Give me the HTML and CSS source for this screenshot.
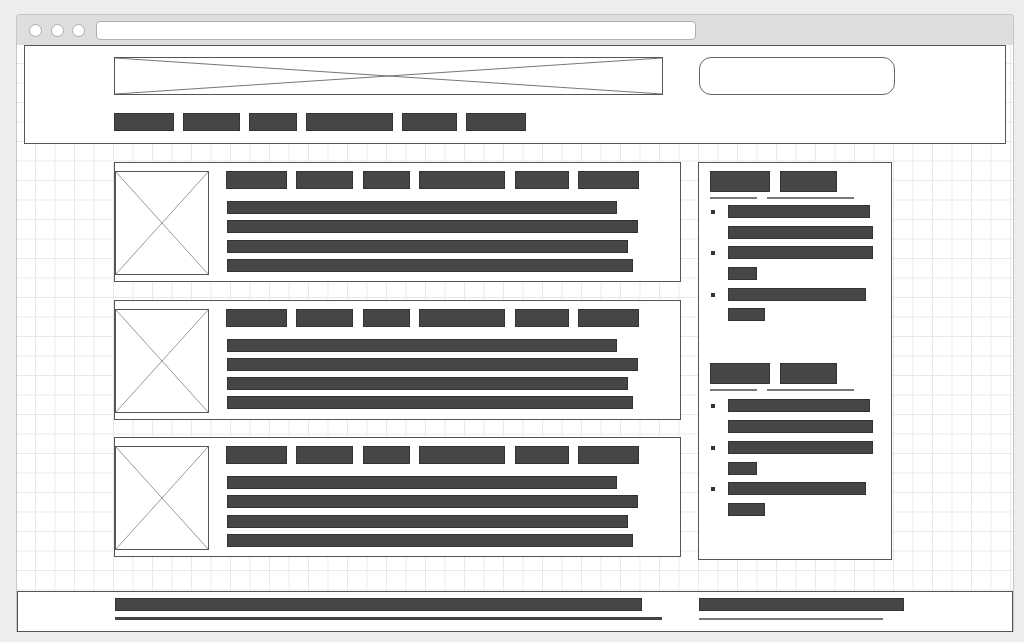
FILE: index.html
```html
<!DOCTYPE html>
<html lang="en">
  <head>
    <meta charset="UTF-8" />
    <meta name="viewport" content="width=device-width, initial-scale=1.0" />
    <title>Wireframe - Blog Layout</title>
    <link rel="stylesheet" href="styles.css">
  </head>
  <body>
    <div class="browser">
      <div class="titlebar">
        <span class="dot"></span>
        <span class="dot"></span>
        <span class="dot"></span>
        <div class="address"></div>
      </div>

      <div class="page">
        <div class="header">
          <div class="header-top">
            <div class="logo">
              <svg viewBox="0 0 100 100" preserveAspectRatio="none">
                <line x1="0" y1="0" x2="100" y2="100" />
                <line x1="0" y1="100" x2="100" y2="0" />
              </svg>
            </div>
            <div class="search"></div>
          </div>
          <div class="nav">
            <span class="bar nav-item" style="width: 60px"></span>
            <span class="bar nav-item" style="width: 57px"></span>
            <span class="bar nav-item" style="width: 48px"></span>
            <span class="bar nav-item" style="width: 87px"></span>
            <span class="bar nav-item" style="width: 55px"></span>
            <span class="bar nav-item" style="width: 60px"></span>
          </div>
        </div>

        <div class="main">
          <div class="cards">
            <div class="card">
              <div class="thumb">
                <svg viewBox="0 0 100 100" preserveAspectRatio="none">
                  <line x1="0" y1="0" x2="100" y2="100" />
                  <line x1="0" y1="100" x2="100" y2="0" />
                </svg>
              </div>
              <div class="card-body">
                <div class="tags">
                  <span class="bar tag" style="width: 61px"></span>
                  <span class="bar tag" style="width: 57px"></span>
                  <span class="bar tag" style="width: 47px"></span>
                  <span class="bar tag" style="width: 86px"></span>
                  <span class="bar tag" style="width: 54px"></span>
                  <span class="bar tag" style="width: 61px"></span>
                </div>
                <div class="lines">
                  <span class="bar line" style="width: 390px"></span>
                  <span class="bar line" style="width: 411px"></span>
                  <span class="bar line" style="width: 401px"></span>
                  <span class="bar line" style="width: 406px"></span>
                </div>
              </div>
            </div>

            <div class="card">
              <div class="thumb">
                <svg viewBox="0 0 100 100" preserveAspectRatio="none">
                  <line x1="0" y1="0" x2="100" y2="100" />
                  <line x1="0" y1="100" x2="100" y2="0" />
                </svg>
              </div>
              <div class="card-body">
                <div class="tags">
                  <span class="bar tag" style="width: 61px"></span>
                  <span class="bar tag" style="width: 57px"></span>
                  <span class="bar tag" style="width: 47px"></span>
                  <span class="bar tag" style="width: 86px"></span>
                  <span class="bar tag" style="width: 54px"></span>
                  <span class="bar tag" style="width: 61px"></span>
                </div>
                <div class="lines">
                  <span class="bar line" style="width: 390px"></span>
                  <span class="bar line" style="width: 411px"></span>
                  <span class="bar line" style="width: 401px"></span>
                  <span class="bar line" style="width: 406px"></span>
                </div>
              </div>
            </div>

            <div class="card">
              <div class="thumb">
                <svg viewBox="0 0 100 100" preserveAspectRatio="none">
                  <line x1="0" y1="0" x2="100" y2="100" />
                  <line x1="0" y1="100" x2="100" y2="0" />
                </svg>
              </div>
              <div class="card-body">
                <div class="tags">
                  <span class="bar tag" style="width: 61px"></span>
                  <span class="bar tag" style="width: 57px"></span>
                  <span class="bar tag" style="width: 47px"></span>
                  <span class="bar tag" style="width: 86px"></span>
                  <span class="bar tag" style="width: 54px"></span>
                  <span class="bar tag" style="width: 61px"></span>
                </div>
                <div class="lines">
                  <span class="bar line" style="width: 390px"></span>
                  <span class="bar line" style="width: 411px"></span>
                  <span class="bar line" style="width: 401px"></span>
                  <span class="bar line" style="width: 406px"></span>
                </div>
              </div>
            </div>
          </div>

          <div class="sidebar">
            <div class="widget">
              <div class="widget-head">
                <span class="bar head-block" style="width: 60px"></span>
                <span class="bar head-block" style="width: 57px"></span>
              </div>
              <div class="widget-rule">
                <span class="rule" style="width: 47px"></span>
                <span class="rule" style="width: 87px"></span>
              </div>
              <ul class="list">
                <li>
                  <span class="bar item" style="width: 142px"></span>
                  <span class="bar item" style="width: 145px"></span>
                </li>
                <li>
                  <span class="bar item" style="width: 145px"></span>
                  <span class="bar item" style="width: 29px"></span>
                </li>
                <li>
                  <span class="bar item" style="width: 138px"></span>
                  <span class="bar item" style="width: 37px"></span>
                </li>
              </ul>
            </div>

            <div class="widget">
              <div class="widget-head">
                <span class="bar head-block" style="width: 60px"></span>
                <span class="bar head-block" style="width: 57px"></span>
              </div>
              <div class="widget-rule">
                <span class="rule" style="width: 47px"></span>
                <span class="rule" style="width: 87px"></span>
              </div>
              <ul class="list">
                <li>
                  <span class="bar item" style="width: 142px"></span>
                  <span class="bar item" style="width: 145px"></span>
                </li>
                <li>
                  <span class="bar item" style="width: 145px"></span>
                  <span class="bar item" style="width: 29px"></span>
                </li>
                <li>
                  <span class="bar item" style="width: 138px"></span>
                  <span class="bar item" style="width: 37px"></span>
                </li>
              </ul>
            </div>
          </div>
        </div>

        <div class="footer">
          <div class="footer-col footer-left">
            <span class="bar footer-bar" style="width: 527px"></span>
            <span class="footer-line thick" style="width: 547px"></span>
          </div>
          <div class="footer-col footer-right">
            <span class="bar footer-bar" style="width: 205px"></span>
            <span class="footer-line thin" style="width: 184px"></span>
          </div>
        </div>
      </div>
    </div>
  </body>
</html>
```
FILE: styles.css
```css
* {
  margin: 0;
  padding: 0;
  box-sizing: border-box;
}

body {
  font-family: "Liberation Sans", Arial, sans-serif;
  background: #ededed;
  height: 642px;
  overflow: hidden;
}

.browser {
  margin: 14px 0 0 16px;
  width: 998px;
  border: 1px solid #c6c6c6;
  border-bottom: none;
  border-radius: 4px 4px 0 0;
  background: #fff;
}

/* Window chrome */
.titlebar {
  height: 30px;
  background: #dedede;
  display: flex;
  align-items: center;
  padding-left: 12px;
  gap: 8.5px;
  border-radius: 3px 3px 0 0;
}

.dot {
  width: 13px;
  height: 13px;
  border-radius: 50%;
  background: #fff;
  border: 1px solid #aaa;
}

.address {
  width: 600px;
  height: 19px;
  margin-left: 2px;
  background: #fff;
  border: 1px solid #b0b0b0;
  border-radius: 4px;
}

/* Content area with the sketch grid */
.page {
  background-color: #fff;
  background-image: linear-gradient(#e9e9e9 1px, transparent 1px),
    linear-gradient(90deg, #e9e9e9 1px, transparent 1px);
  background-size: 19.5px 19.5px;
  background-position: 18px 18px;
}

.bar {
  display: block;
  background: #464646;
  border: 1px solid #333;
}

.header {
  margin-left: 7px;
  width: 982px;
  background: #fff;
  border: 1px solid #555;
  padding: 11px 0 12px 89px;
}

.header-top {
  display: flex;
  gap: 36px;
}

.logo {
  width: 549px;
  height: 38px;
  border: 1px solid #555;
}

.logo svg,
.thumb svg {
  display: block;
  width: 100%;
  height: 100%;
}

.logo line {
  stroke: #777;
  stroke-width: 1;
  vector-effect: non-scaling-stroke;
}

.search {
  width: 196px;
  height: 38px;
  border: 1px solid #666;
  border-radius: 12px;
}

.nav {
  display: flex;
  gap: 9px;
  margin-top: 18px;
}

.nav-item {
  height: 18px;
}

/* Main columns */
.main {
  display: flex;
  align-items: flex-start;
  gap: 17px;
  padding: 18px 0 31px 97px;
}

.cards {
  width: 567px;
  display: flex;
  flex-direction: column;
  gap: 17.5px;
}

.card {
  display: flex;
  gap: 17px;
  background: #fff;
  border: 1px solid #555;
  padding: 8px 0 6px 0;
}

.thumb {
  width: 94px;
  height: 104px;
  border: 1px solid #555;
}

.thumb line {
  stroke: #999;
  stroke-width: 1;
  vector-effect: non-scaling-stroke;
}

.card-body {
  flex: 1;
}

.tags {
  display: flex;
  gap: 9.4px;
}

.tag {
  height: 18px;
}

.lines {
  display: flex;
  flex-direction: column;
  gap: 6.3px;
  margin: 12px 0 0 1px;
}

.line {
  height: 13px;
}

/* Sidebar */
.sidebar {
  width: 194px;
  height: 398px;
  background: #fff;
  border: 1px solid #555;
  padding: 8px 0 0 11px;
  display: flex;
  flex-direction: column;
  gap: 42px;
}

.widget-head {
  display: flex;
  gap: 10px;
}

.head-block {
  height: 21px;
}

.widget-rule {
  display: flex;
  gap: 10px;
  margin-top: 5px;
}

.rule {
  display: block;
  height: 2px;
  background: #777;
}

.list {
  list-style: none;
  margin-top: 6px;
  display: flex;
  flex-direction: column;
  gap: 7.7px;
}

.widget + .widget .list {
  margin-top: 8px;
}

.list li {
  position: relative;
  padding-left: 18px;
  display: flex;
  flex-direction: column;
  gap: 7.7px;
}

.list li::before {
  content: "";
  position: absolute;
  left: 1px;
  top: 5px;
  width: 4px;
  height: 4px;
  background: #333;
}

.item {
  height: 13px;
}

/* Footer */
.footer {
  display: flex;
  gap: 38px;
  height: 41px;
  background: #fff;
  border: 1px solid #555;
  padding: 6px 0 0 97px;
}

.footer-col {
  display: flex;
  flex-direction: column;
  gap: 6px;
}

.footer-left {
  width: 546px;
}

.footer-bar {
  height: 13px;
}

.footer-line {
  display: block;
}

.footer-line.thick {
  height: 3px;
  background: #444;
}

.footer-line.thin {
  height: 2px;
  margin-top: 0.5px;
  background: #777;
}
```
